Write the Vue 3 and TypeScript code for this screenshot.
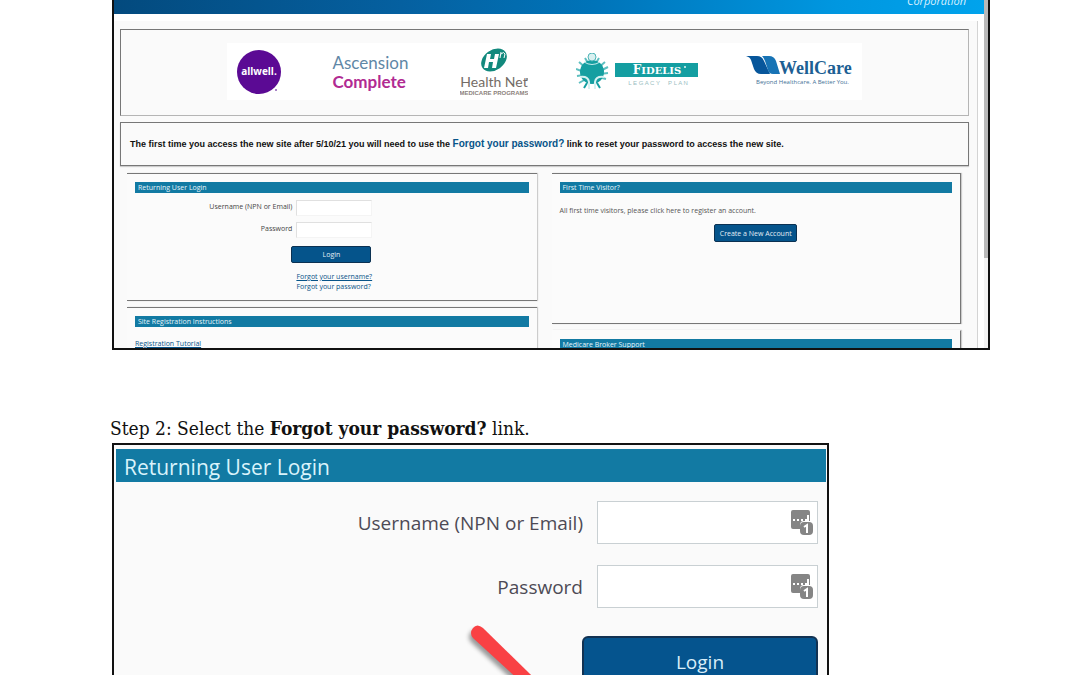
<script setup lang="ts">
import { ref } from 'vue'

const username = ref('')
const password = ref('')
const stepUsername = ref('')
const stepPassword = ref('')
</script>

<template>
  <main class="page">
    <section class="frame portal" aria-label="Broker portal">
      <div class="viewport">
        <header class="masthead"><span>Corporation</span></header>
        <div class="content">
          <div class="panel brands">
            <div class="strip">
              <svg width="44" height="44" viewBox="0 0 44 44" role="img" aria-label="allwell">
                <circle cx="22" cy="22" r="22" fill="#5b0a94" />
                <text x="22" y="25" text-anchor="middle" class="allwell">allwell.</text>
                <circle cx="39" cy="40" r="1" fill="#8d5bb5" />
              </svg>
              <div class="ascension">
                <span>Ascension</span>
                <strong>Complete</strong>
              </div>
              <svg width="68" height="50" viewBox="0 0 68 50" role="img" aria-label="Health Net Medicare Programs">
                <ellipse cx="34" cy="13" rx="14" ry="10" transform="rotate(-35 34 13)" fill="#12897d" />
                <path d="M27 7h4l-1 5h4l1-5h4l-3 14h-4l1-6h-4l-1 6h-4z" fill="#fff" />
                <path d="M40 11l1-6m0 2q3-3 4 0l-1 4" fill="none" stroke="#fff" />
                <text x="34" y="40" text-anchor="middle" class="health">Health Net</text>
                <circle cx="67" cy="32" r="1" fill="#777" />
                <text x="34" y="48" text-anchor="middle" class="programs">MEDICARE PROGRAMS</text>
              </svg>
              <svg width="122" height="38" viewBox="0 0 122 38" role="img" aria-label="Fidelis Legacy Plan">
                <g fill="none" stroke="#5dbfc0" stroke-width="2">
                  <path d="M3 9l7 6M0 16l8 3M1 23l7-1M3 30l7-4M29 9l-7 6M32 14l-8 4M32 20l-8 1M30 26l-8-2M9 5l3 5M23 5l-3 5" />
                </g>
                <circle cx="16" cy="19" r="12" fill="#159fa1" />
                <circle cx="16" cy="4" r="4" fill="#d9f0f0" stroke="#4fb5b7" />
                <path d="M8 9q8 5 16 0" fill="none" stroke="#c3ebeb" />
                <path d="M4 24q8-1 9 5v7M28 24q-8-1-9 5v7" fill="none" stroke="#d5f1f1" stroke-width="2" />
                <path d="M8 35l3-5M24 35l-3-5" stroke="#159fa1" stroke-width="2" />
                <rect x="39" y="10" width="83" height="14" fill="#149ea1" />
                <text x="81" y="21" text-anchor="middle" class="fidelis">F<tspan class="fidelis-rest">IDELIS</tspan></text>
                <circle cx="109" cy="14" r="1" fill="#e8f7f7" />
                <text x="82" y="32" text-anchor="middle" class="legacy">L E G A C Y &#160; &#160; P L A N</text>
              </svg>
              <svg width="107" height="34" viewBox="0 0 107 34" role="img" aria-label="WellCare Beyond Healthcare. A Better You.">
                <path d="M0 1h11q5 0 7 5l6 13h-9q-5 0-7-5L5 5Q4 2 0 1z" fill="#07569b" />
                <path d="M16 1h7q5 0 7 5l4 13h-7q-4 0-5-4l-3-9q-1-3-3-5z" fill="#1773b5" />
                <text x="33" y="19" class="wellcare">WellCare</text>
                <text x="10" y="29" class="tagline">Beyond Healthcare. A Better You.</text>
              </svg>
            </div>
          </div>

          <div class="panel notice">
            <p>The first time you access the new site after 5/10/21 you will need to use the <a href="#step">Forgot your password?</a> link to reset your password to access the new site.</p>
          </div>

          <div class="columns">
            <div class="column">
              <section class="card login">
                <h2>Returning User Login</h2>
                <form class="mini-form" @submit.prevent>
                  <label for="user">Username (NPN or Email)</label>
                  <input id="user" v-model="username" type="text" />
                  <label for="pass">Password</label>
                  <input id="pass" v-model="password" type="password" />
                  <button type="submit">Login</button>
                  <div class="links">
                    <a class="underlined" href="#user">Forgot your username?</a>
                    <a href="#step">Forgot your password?</a>
                  </div>
                </form>
              </section>
              <section class="card">
                <h2>Site Registration Instructions</h2>
                <a class="underlined tutorial" href="#tutorial">Registration Tutorial</a>
              </section>
            </div>
            <div class="column">
              <section class="card edged visitor">
                <h2>First Time Visitor?</h2>
                <p>All first time visitors, please click here to register an account.</p>
                <button type="button">Create a New Account</button>
              </section>
              <section class="card edged support">
                <h2>Medicare Broker Support</h2>
              </section>
            </div>
          </div>
        </div>
      </div>
      <div class="scroll-track"><div class="scroll-thumb"></div></div>
    </section>

    <p id="step" class="step">Step 2: Select the <strong>Forgot your password?</strong> link.</p>

    <section class="frame detail">
      <h2>Returning User Login</h2>
      <form class="big-form" @submit.prevent>
        <label for="big-user">Username (NPN or Email)</label>
        <div class="field">
          <input id="big-user" v-model="stepUsername" type="text" />
          <svg class="keeper" width="22" height="26" viewBox="0 0 22 26" aria-hidden="true">
            <path d="M2 0h15q2 0 2 2v9h-6q-4 0-4 4v4H2q-2 0-2-2V2q0-2 2-2z" fill="#858585" />
            <path d="M2 10h2m2 0h2m2 0h2m2 0h2M17 5v6" stroke="#fff" stroke-width="2" />
            <rect x="9" y="12" width="13" height="13" rx="4" fill="#858585" />
            <path d="M13 17l3-2v8" fill="none" stroke="#fff" stroke-width="2" />
          </svg>
        </div>
        <label for="big-pass">Password</label>
        <div class="field">
          <input id="big-pass" v-model="stepPassword" type="password" />
          <svg class="keeper" width="22" height="26" viewBox="0 0 22 26" aria-hidden="true">
            <path d="M2 0h15q2 0 2 2v9h-6q-4 0-4 4v4H2q-2 0-2-2V2q0-2 2-2z" fill="#858585" />
            <path d="M2 10h2m2 0h2m2 0h2m2 0h2M17 5v6" stroke="#fff" stroke-width="2" />
            <rect x="9" y="12" width="13" height="13" rx="4" fill="#858585" />
            <path d="M13 17l3-2v8" fill="none" stroke="#fff" stroke-width="2" />
          </svg>
        </div>
        <button type="submit">Login</button>
      </form>
      <svg class="pointer" width="120" height="100" viewBox="0 0 120 100" aria-hidden="true">
        <path d="M24 11L114 99L97 97L14 21Q10 16 14 11T24 11z" fill="#f94144" />
      </svg>
    </section>
  </main>
</template>

<style>
body {
  margin: 0;
  background: #fff;
}
</style>

<style scoped>
* {
  box-sizing: border-box;
}

.page {
  height: 100vh;
  overflow: hidden;
  padding: 0 90px 0 112px;
  font-family: "Open Sans", "Noto Sans", sans-serif;
}

h2,
p {
  margin: 0;
  font-weight: 400;
}

a {
  color: #075489;
  text-decoration: none;
}

.underlined {
  text-decoration: underline;
}

.frame {
  border: 2px solid #111;
  overflow: hidden;
}

.portal {
  display: flex;
  height: 350px;
  border-top: 0;
  font-size: 7px;
  line-height: 10px;
}

.viewport {
  flex: 1;
  min-width: 0;
}

.masthead {
  display: flex;
  align-items: flex-end;
  justify-content: flex-end;
  height: 14px;
  padding: 0 18px 6px 0;
  overflow: hidden;
  background: linear-gradient(90deg, #034a7e 0%, #0560a0 33%, #0074b9 55%, #0097e0 83%, #00a3ec 100%);
  color: #d8f0ff;
  font-size: 11px;
  font-style: italic;
  line-height: 14px;
}

.content {
  margin: 7px 6px 0 0;
  padding: 8px 8px 0 6px;
  border-right: 1px solid #d4d4d4;
  background: #fafafa;
}

.scroll-track {
  width: 4px;
  background: #f3f3f3;
}

.scroll-thumb {
  height: 258px;
  background: #b9b9b9;
}

.panel {
  border: 1px solid #777;
  background: #fafafa;
}

.brands {
  display: flex;
  align-items: center;
  justify-content: center;
  height: 87px;
  padding-bottom: 2px;
  border-right-color: #b5b5b5;
  border-bottom-color: #b5b5b5;
}

.strip {
  display: flex;
  align-items: center;
  justify-content: center;
  gap: 48px;
  width: 75%;
  height: 57px;
  background: #fff;
}

.strip svg {
  flex: none;
}

.ascension {
  display: flex;
  flex-direction: column;
  width: 83px;
  padding-left: 4px;
  color: #5f87a6;
  font-family: Lato, sans-serif;
  font-size: 17px;
  line-height: 19px;
}

.ascension strong {
  color: #b12a92;
}

.allwell {
  fill: #fff;
  font: 700 10px "Open Sans", sans-serif;
}

.health {
  fill: #746c66;
  font: 14px Lato, sans-serif;
}

.programs {
  fill: #8b817b;
  font: 700 6px "Liberation Sans", sans-serif;
}

.fidelis {
  fill: #fff;
  font: 700 12px "DejaVu Serif", serif;
}

.fidelis-rest {
  font-size: 10px;
}

.legacy {
  fill: #9abebf;
  font: 6px "Liberation Sans", sans-serif;
}

.wellcare {
  fill: #1d5f94;
  font: 700 18px "Liberation Serif", serif;
}

.tagline {
  fill: #3f7196;
  font: 6px "Open Sans", sans-serif;
}

.notice {
  display: flex;
  align-items: center;
  height: 44px;
  margin-top: 6px;
  padding: 0 9px;
  border-bottom-color: #777;
  box-shadow: 0 1px 1px #ccc;
  color: #111;
  font-family: "Liberation Sans", sans-serif;
  font-size: 9px;
  font-weight: 700;
}

.notice p {
  font-weight: 700;
}

.notice a {
  font-size: 10px;
}

.columns {
  display: grid;
  grid-template-columns: 1fr 1fr;
  gap: 15px;
  padding: 7px 8px 0 7px;
}

.column {
  display: flex;
  flex-direction: column;
  gap: 6px;
}

.card {
  padding: 8px;
  border-top: 1px solid #777;
  border-bottom: 1px solid #777;
  box-shadow: 1px 0 1px #ccc;
  background: #fbfbfb;
}

.card.edged {
  border-right: 1px solid #777;
}

.card h2 {
  height: 11px;
  padding: 0 3px;
  background: #127aa3;
  color: #e6f5fa;
  font-size: 7px;
  line-height: 12px;
}

.login {
  height: 128px;
}

.visitor {
  height: 151px;
}

.card.support {
  border-top-color: transparent;
}

.mini-form {
  display: grid;
  grid-template-columns: 40% 80px;
  column-gap: 4px;
  row-gap: 6px;
  padding-top: 7px;
}

.mini-form label {
  padding-top: 2px;
  text-align: right;
  color: #444;
}

.mini-form input {
  width: 76px;
  height: 16px;
  padding: 0 2px;
  border: 1px solid #e0e0e0;
  border-right-color: #f4f4f4;
  border-bottom-color: #f4f4f4;
  background: #fff;
  font-size: 7px;
}

.card button {
  padding: 0;
  border: 1px solid #0b3152;
  border-radius: 2px;
  background: #05548b;
  color: #e3eef5;
  font: 7px "Open Sans", sans-serif;
}

.mini-form button {
  grid-column: 2;
  width: 80px;
  height: 17px;
  margin-top: 2px;
  margin-left: -5px;
}

.mini-form .links {
  display: flex;
  grid-column: 2;
  flex-direction: column;
  padding-top: 3px;
  white-space: nowrap;
}

.tutorial {
  display: block;
  padding-top: 12px;
}

.visitor p {
  padding-top: 13px;
  color: #555;
}

.visitor button {
  display: block;
  width: 83px;
  height: 18px;
  margin: 8px auto 0;
}

.step {
  margin: 65px 0 1px -2px;
  color: #111;
  font-family: "DejaVu Serif Condensed", "DejaVu Serif", serif;
  font-size: 19px;
  line-height: 27px;
}

.detail {
  position: relative;
  max-width: 717px;
  padding: 4px 1px 0 2px;
  background: #fafafa;
}

.detail h2 {
  height: 33px;
  padding: 0 8px;
  background: #127aa3;
  color: #d9f3fb;
  font-size: 21px;
  line-height: 37px;
}

.big-form {
  display: grid;
  grid-template-columns: 1fr 221px;
  column-gap: 14px;
  row-gap: 21px;
  padding: 19px 8px 20px;
}

.big-form label {
  align-self: center;
  text-align: right;
  color: #4d4a55;
  font-size: 19px;
  line-height: 28px;
}

.field {
  position: relative;
}

.field input {
  display: block;
  width: 100%;
  height: 43px;
  padding: 0 32px 0 10px;
  border: 1px solid #c9d0d3;
  background: #fff;
  font-size: 19px;
}

.keeper {
  position: absolute;
  top: 9px;
  right: 5px;
}

.big-form button {
  grid-column: 1 / -1;
  justify-self: end;
  width: 236px;
  height: 52px;
  margin-top: 7px;
  border: 2px solid #123252;
  border-radius: 6px;
  background: #05548e;
  color: #d9edf8;
  font: 19px "Open Sans", sans-serif;
}

.pointer {
  position: absolute;
  top: 172px;
  left: 345px;
  filter: drop-shadow(-2px 4px 2px #999);
}
</style>
